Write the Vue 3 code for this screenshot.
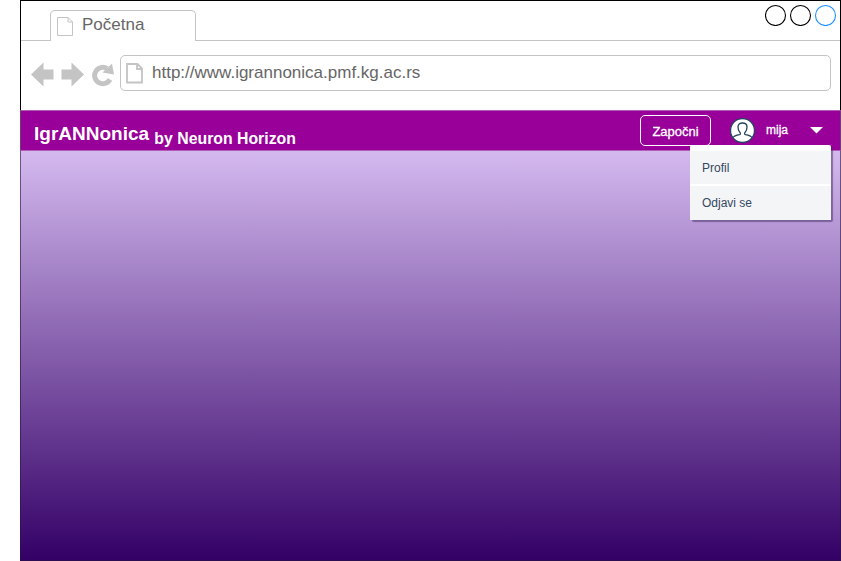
<script setup>
import { ref } from 'vue'

const menuItems = ['Profil', 'Odjavi se']
const menuOpen = ref(true)
</script>

<template>
  <div class="window">
    <div class="tabs">
      <div class="lead"></div>
      <div class="tab">
        <svg class="tab-icon" width="17" height="20" viewBox="0 0 17 20">
          <path d="M.5 .5H11L15.500 5V18.500H.5ZM11 .5V5H15.500" />
        </svg>
        <span>Početna</span>
      </div>
      <div class="rest">
        <svg width="72" height="22" viewBox="0 0 72 22" fill="#fff" stroke-width="1.100">
          <circle cx="10.500" cy="11.500" r="10" stroke="#000" />
          <circle cx="35.500" cy="11.500" r="10" stroke="#000" />
          <circle cx="60.500" cy="11.500" r="10" stroke="#1a90ff" />
        </svg>
      </div>
    </div>

    <div class="toolbar">
      <svg class="nav" width="84" height="26" viewBox="0 0 84 26">
        <path d="M0 13.500L12.500 1.500V8.500H22.500V18.500H12.500V25.500Z" fill="#c4c4c4" />
        <path d="M53 13.500L40.500 1.500V8.500H30.500V18.500H40.500V25.500Z" fill="#c4c4c4" />
        <path d="M79 18.500A8.200 8.200 0 1 1 76 7.500" fill="none" stroke="#c4c4c4" stroke-width="5" />
        <path d="M81 2.500L83 13.500L71.500 11.500Z" fill="#c4c4c4" />
      </svg>
      <div class="address">
        <svg width="18" height="21" viewBox="0 0 18 21">
          <path d="M1 1H11.500L16 5.500V19.500H1ZM11 1V6H16" fill="none" stroke="#c4c4c4" stroke-width="1.800" />
        </svg>
        <span>http://www.igrannonica.pmf.kg.ac.rs</span>
      </div>
    </div>

    <header class="header">
      <div class="brand">IgrANNonica <span class="by">by Neuron Horizon</span></div>
      <button class="start">Započni</button>
      <div class="account" @click="menuOpen = !menuOpen">
        <svg width="25" height="25" viewBox="0 0 25 25" fill="none" stroke="#23445d" stroke-width="1.300">
          <circle cx="12.500" cy="12.500" r="12" fill="#fff" />
          <path d="M3 19.500C4 18 6.500 17.300 9.500 16.700C10.800 16.300 10.600 15.200 9.800 14.200C8.500 12.700 8 11 8 9C8 6.500 9.800 5 12.500 5S17 6.500 17 9C17 11 16.500 12.700 15.200 14.200C14.400 15.200 14.200 16.300 15.500 16.700C18.500 17.300 21 18 22 19.500" />
        </svg>
        <span class="user">mija</span>
        <svg class="caret" width="13" height="7" viewBox="0 0 13 7"><path d="M0 0H13L6.500 6.500Z" fill="#fff" /></svg>
        <ul v-if="menuOpen" class="menu">
          <li v-for="item in menuItems" :key="item">{{ item }}</li>
        </ul>
      </div>
    </header>

    <main class="content"></main>
  </div>
</template>

<style>
body {
  background: #fff;
}
</style>

<style scoped>
.window {
  box-sizing: border-box;
  display: flex;
  flex-direction: column;
  height: 561px;
  margin-left: 20px;
  border: 1px solid #000;
  border-bottom: 0;
  font-family: "Liberation Sans", Arial, sans-serif;
  background: #fff;
}
.tabs {
  display: flex;
  height: 40px;
}
.lead {
  width: 29px;
  border-bottom: 1px solid #c4c4c4;
}
.tab {
  box-sizing: border-box;
  display: flex;
  width: 146px;
  margin-top: 9px;
  padding: 6px 0 0 6px;
  border: 1px solid #c4c4c4;
  border-bottom: 0;
  border-radius: 5px 5px 0 0;
  color: #666;
  font-size: 17px;
  line-height: 17px;
}
.tab-icon {
  fill: none;
  stroke: #c4c4c4;
  margin-right: 8px;
}
.tab span {
  margin-top: -1px;
}
.rest {
  display: flex;
  flex: 1;
  justify-content: flex-end;
  padding: 3px 3px 0 0;
  border-bottom: 1px solid #c4c4c4;
}
.toolbar {
  display: flex;
  height: 69px;
  box-sizing: border-box;
  padding: 14px 9px 0 10px;
}
.nav {
  margin: 6px 5px 0 0;
}
.address {
  box-sizing: border-box;
  display: flex;
  flex: 1;
  align-items: center;
  gap: 8px;
  height: 36px;
  padding-left: 5px;
  border: 1px solid #c4c4c4;
  border-radius: 5px;
  color: #666;
  font-size: 17px;
}
.address svg {
  margin-top: 1px;
}
.address span {
  line-height: 20px;
  margin-top: -1px;
}
.header {
  box-sizing: border-box;
  display: flex;
  height: 41px;
  padding: 4px 17px 0 13px;
  background: #990099;
  border: solid #b05bb5;
  border-width: 1px 0;
  margin: 0 -1px;
  border-left: 1px solid #6d3d78;
  border-right: 1px solid #6d3d78;
  color: #fff;
}
.brand {
  flex: 1;
  padding-top: 7px;
  font-size: 19px;
  font-weight: bold;
  line-height: 23px;
  white-space: nowrap;
}
.by {
  position: relative;
  top: 4px;
  font-size: 15.830px;
}
.start {
  box-sizing: border-box;
  width: 71px;
  height: 31px;
  margin-right: -1px;
  padding: 1px 0 0;
  border: 1px solid #fff;
  border-radius: 5px;
  background: transparent;
  color: #fff;
  font: 13px "Liberation Sans", Arial, sans-serif;
  -webkit-text-stroke: 0.300px #fff;
}
.account {
  position: relative;
  display: flex;
  align-items: flex-start;
  padding: 3px 0 0 20px;
}
.user {
  width: 44px;
  margin-left: 11px;
  padding-top: 5px;
  font-size: 12px;
  line-height: 14px;
  -webkit-text-stroke: 0.300px #fff;
}
.caret {
  margin-top: 9px;
}
.menu {
  position: absolute;
  top: 30px;
  right: -8px;
  box-sizing: border-box;
  width: 141px;
  height: 75px;
  margin: 0;
  padding: 6px 0 0;
  display: grid;
  grid-template-rows: 33px 34px;
  gap: 2px;
  list-style: none;
  background: #fff;
  border-radius: 2px;
  box-shadow: 2px 2px 1px rgba(60, 40, 90, 0.500);
  color: #35475f;
  font-size: 12px;
}
.menu li {
  padding-left: 12px;
  line-height: 35px;
  background: #f4f5f7;
}
.content {
  flex: 1;
  margin: 0 -1px;
  border: 1px solid rgba(40, 20, 70, 0.600);
  border-top: 0;
  background: linear-gradient(#d4b9ef, #330066) border-box;
}
</style>
